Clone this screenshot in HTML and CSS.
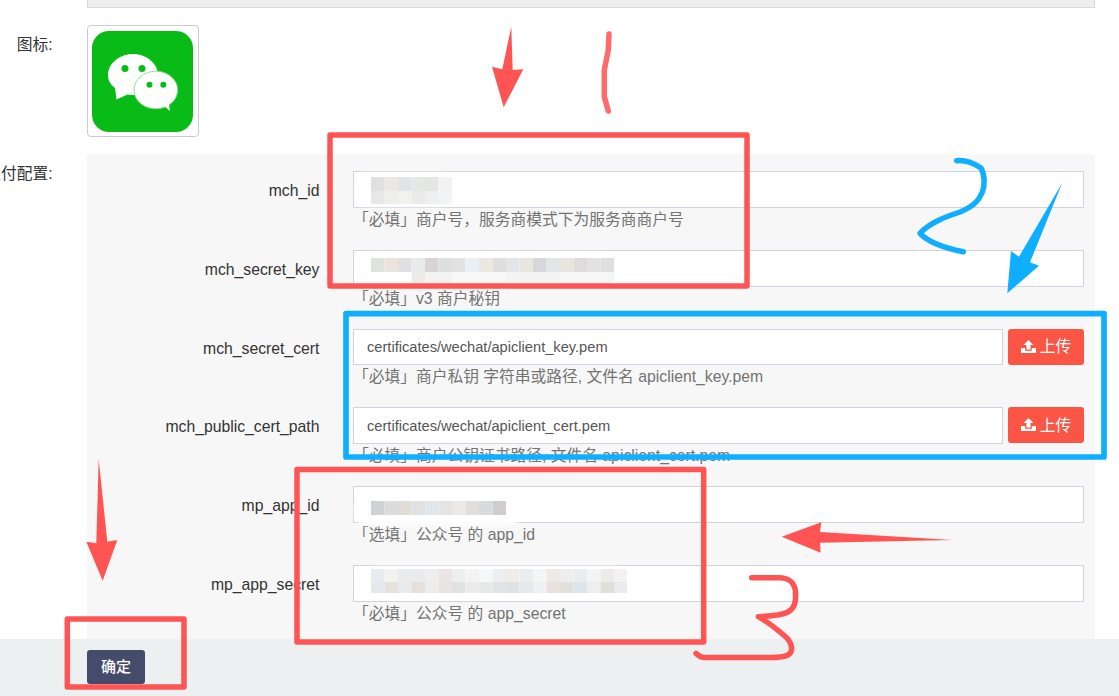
FILE: index.html
```html
<!DOCTYPE html>
<html lang="zh-CN">
<head>
<meta charset="utf-8">
<title>支付配置</title>
<link rel="stylesheet" href="styles.css">
</head>
<body>
<form class="page">
  <div class="top-field"></div>
  <div class="row">
    <div class="row-label">图标:</div>
    <div class="icon-box">
      <svg class="app-icon" viewBox="0 0 101 101" width="101" height="101">
        <rect width="101" height="101" rx="17" fill="#09bb17"/>
        <path d="M24.5 68.5 L23 57 C18 53 16 49 16 44 C16 33 27 23 41 23 C55 23 66 33 66 44 C66 55 55 64 41 64 C39 64 37.500 64 35.500 63.500 Z" fill="#fff"/>
        <ellipse cx="63.800" cy="59" rx="21.800" ry="18.800" fill="#fff" stroke="#8fdf95" stroke-width="1"/>
        <path d="M71 74 L78 80 L76.500 70 Z" fill="#fff"/>
        <circle cx="33" cy="37.500" r="3.500" fill="#09bb17"/>
        <circle cx="50" cy="37.500" r="3.500" fill="#09bb17"/>
        <circle cx="57.500" cy="53.800" r="3" fill="#09bb17"/>
        <circle cx="71.300" cy="53.800" r="3" fill="#09bb17"/>
      </svg>
    </div>
  </div>
  <div class="row">
    <div class="row-label">支付配置:</div>
    <div class="panel">
      <div class="field">
        <label class="field-label">mch_id</label>
        <div class="field-body">
          <input class="text-input" type="text">
          <p class="help">「必填」商户号，服务商模式下为服务商商户号</p>
        </div>
      </div>
      <div class="field">
        <label class="field-label">mch_secret_key</label>
        <div class="field-body">
          <input class="text-input" type="text">
          <p class="help">「必填」v3 商户秘钥</p>
        </div>
      </div>
      <div class="field">
        <label class="field-label">mch_secret_cert</label>
        <div class="field-body">
          <div class="input-line">
            <input class="text-input" type="text" value="certificates/wechat/apiclient_key.pem">
            <button class="upload" type="button">
              <svg class="upload-icon" viewBox="0 0 15 13" width="15" height="13"><path d="M7.500 0 L12.500 5 H9.500 V9.500 H5.500 V5 H2.500 Z M0 8 H4.200 V10.700 H10.800 V8 H15 V13 H0 Z" fill="#fff"/></svg>
              <span>上传</span>
            </button>
          </div>
          <p class="help">「必填」商户私钥 字符串或路径, 文件名 apiclient_key.pem</p>
        </div>
      </div>
      <div class="field">
        <label class="field-label">mch_public_cert_path</label>
        <div class="field-body">
          <div class="input-line">
            <input class="text-input" type="text" value="certificates/wechat/apiclient_cert.pem">
            <button class="upload" type="button">
              <svg class="upload-icon" viewBox="0 0 15 13" width="15" height="13"><path d="M7.500 0 L12.500 5 H9.500 V9.500 H5.500 V5 H2.500 Z M0 8 H4.200 V10.700 H10.800 V8 H15 V13 H0 Z" fill="#fff"/></svg>
              <span>上传</span>
            </button>
          </div>
          <p class="help">「必填」商户公钥证书路径, 文件名 apiclient_cert.pem</p>
        </div>
      </div>
      <div class="field">
        <label class="field-label">mp_app_id</label>
        <div class="field-body">
          <input class="text-input" type="text">
          <p class="help">「选填」公众号 的 app_id</p>
        </div>
      </div>
      <div class="field">
        <label class="field-label">mp_app_secret</label>
        <div class="field-body">
          <input class="text-input" type="text">
          <p class="help">「必填」公众号 的 app_secret</p>
        </div>
      </div>
    </div>
  </div>
  <div class="footer">
    <button class="confirm" type="button">确定</button>
  </div>
</form>

<svg class="markup" viewBox="0 0 1119 696" width="1119" height="696">
  <!-- mosaics that hide the secrets -->
  <g class="smear" fill="#fff">
    <rect x="356" y="173" width="96" height="33" rx="10"/>
    <rect x="367" y="253" width="246" height="33" rx="12"/>
    <rect x="355" y="497" width="165" height="28" rx="10"/>
    <rect x="362" y="567" width="266" height="28" rx="13"/>
  </g>
  <g>
    <rect x="371" y="177" width="13.500" height="14" fill="#e0dfe1"/><rect x="384.500" y="177" width="13.500" height="14" fill="#ece7e2"/><rect x="398" y="177" width="13.500" height="14" fill="#e2e3e7"/><rect x="411.500" y="177" width="13.500" height="14" fill="#e6e8e7"/><rect x="425" y="177" width="13.500" height="14" fill="#e5e5e3"/><rect x="438.500" y="177" width="13.500" height="14" fill="#f0f3f3"/>
    <rect x="371" y="191" width="13.500" height="13" fill="#e9e8e9"/><rect x="384.500" y="191" width="13.500" height="13" fill="#eeeeec"/><rect x="398" y="191" width="13.500" height="13" fill="#f1f1ef"/><rect x="411.500" y="191" width="13.500" height="13" fill="#eceae8"/><rect x="425" y="191" width="13.500" height="13" fill="#efeff2"/><rect x="438.500" y="191" width="13.500" height="13" fill="#f2f3f4"/>
  </g>
  <g>
    <rect x="371" y="258" width="13.500" height="14" fill="#e0e2de"/><rect x="384.500" y="258" width="13.500" height="14" fill="#ebe3dc"/><rect x="398" y="258" width="13.500" height="14" fill="#e0e0e2"/><rect x="411.500" y="258" width="13.500" height="14" fill="#e8ebec"/><rect x="425" y="258" width="13.500" height="14" fill="#d9d4d4"/><rect x="438.500" y="258" width="13.500" height="14" fill="#dde0e3"/><rect x="452" y="258" width="13.500" height="14" fill="#e2e2e2"/><rect x="465.500" y="258" width="13.500" height="14" fill="#e9f0f5"/><rect x="479" y="258" width="13.500" height="14" fill="#ede7e2"/><rect x="492.500" y="258" width="13.500" height="14" fill="#dededc"/><rect x="506" y="258" width="13.500" height="14" fill="#e4e5e8"/><rect x="519.500" y="258" width="13.500" height="14" fill="#ebe5df"/><rect x="533" y="258" width="13.500" height="14" fill="#d6d6dc"/><rect x="546.500" y="258" width="13.500" height="14" fill="#e3e4e6"/><rect x="560" y="258" width="13.500" height="14" fill="#e8e5df"/><rect x="573.500" y="258" width="13.500" height="14" fill="#dfdbdd"/><rect x="587" y="258" width="13.500" height="14" fill="#e2e2e2"/><rect x="600.500" y="258" width="13.500" height="14" fill="#e0dfdc"/>
    <rect x="411.500" y="272" width="13.500" height="12" fill="#ebebe8"/><rect x="425" y="272" width="27" height="12" fill="#f3f3f3"/><rect x="452" y="272" width="54" height="12" fill="#f8f8f8"/><rect x="506" y="272" width="54" height="12" fill="#f4f4f4"/><rect x="560" y="272" width="54" height="12" fill="#f5f6f7"/>
  </g>
  <g>
    <rect x="371" y="501" width="13.500" height="14" fill="#d0d2d3"/><rect x="384.500" y="501" width="13.500" height="14" fill="#d9dbdd"/><rect x="398" y="501" width="13.500" height="14" fill="#e2dcd6"/><rect x="411.500" y="501" width="13.500" height="14" fill="#dfe1e3"/><rect x="425" y="501" width="13.500" height="14" fill="#e0e7ec"/><rect x="438.500" y="501" width="13.500" height="14" fill="#e6e4e2"/><rect x="452" y="501" width="13.500" height="14" fill="#ebe8e6"/><rect x="465.500" y="501" width="13.500" height="14" fill="#e3dfdd"/><rect x="479" y="501" width="13.500" height="14" fill="#d8dadb"/><rect x="492.500" y="501" width="13.500" height="14" fill="#cfcdce"/>
  </g>
  <g>
    <rect x="371" y="569" width="13.500" height="13" fill="#e9ecef"/><rect x="384.500" y="569" width="13.500" height="13" fill="#f4f2ef"/><rect x="398" y="569" width="27" height="13" fill="#e9ebec"/><rect x="425" y="569" width="13.500" height="13" fill="#eeeeee"/><rect x="438.500" y="569" width="13.500" height="13" fill="#ebe6e3"/><rect x="452" y="569" width="13.500" height="13" fill="#eeeeef"/><rect x="465.500" y="569" width="13.500" height="13" fill="#f3f3f3"/><rect x="479" y="569" width="13.500" height="13" fill="#f6f7f7"/><rect x="492.500" y="569" width="13.500" height="13" fill="#eceef0"/><rect x="506" y="569" width="13.500" height="13" fill="#f0ede8"/><rect x="519.500" y="569" width="13.500" height="13" fill="#ebedef"/><rect x="533" y="569" width="13.500" height="13" fill="#f4f5f5"/><rect x="546.500" y="569" width="13.500" height="13" fill="#ece9e7"/><rect x="560" y="569" width="13.500" height="13" fill="#efeded"/><rect x="573.500" y="569" width="13.500" height="13" fill="#e9edf0"/><rect x="587" y="569" width="13.500" height="13" fill="#f4f4f4"/><rect x="600.500" y="569" width="13.500" height="13" fill="#eeeae8"/><rect x="614" y="569" width="13" height="13" fill="#f3f2f1"/>
    <rect x="371" y="582" width="13.500" height="11" fill="#e3e9ed"/><rect x="384.500" y="582" width="13.500" height="11" fill="#e6e1dd"/><rect x="398" y="582" width="13.500" height="11" fill="#e7ebec"/><rect x="411.500" y="582" width="13.500" height="11" fill="#e5e0da"/><rect x="425" y="582" width="13.500" height="11" fill="#ececec"/><rect x="438.500" y="582" width="13.500" height="11" fill="#e8e4e1"/><rect x="452" y="582" width="13.500" height="11" fill="#dfe2e3"/><rect x="465.500" y="582" width="13.500" height="11" fill="#ebebeb"/><rect x="479" y="582" width="13.500" height="11" fill="#e8e8e8"/><rect x="492.500" y="582" width="13.500" height="11" fill="#e2e3e4"/><rect x="506" y="582" width="13.500" height="11" fill="#dfe2e5"/><rect x="519.500" y="582" width="13.500" height="11" fill="#e6e9eb"/><rect x="533" y="582" width="13.500" height="11" fill="#eef0f1"/><rect x="546.500" y="582" width="13.500" height="11" fill="#e7e2de"/><rect x="560" y="582" width="13.500" height="11" fill="#e3dfda"/><rect x="573.500" y="582" width="13.500" height="11" fill="#dce5eb"/><rect x="587" y="582" width="13.500" height="11" fill="#eeeeee"/><rect x="600.500" y="582" width="13.500" height="11" fill="#e2dfdb"/><rect x="614" y="582" width="13" height="11" fill="#ebebed"/>
  </g>

  <!-- hand-drawn boxes -->
  <g fill="none" stroke="#ff5454" stroke-width="5.500" stroke-linejoin="round">
    <rect x="330" y="135" width="417" height="151"/>
    <rect x="297" y="469.500" width="406.700" height="172.500"/>
    <rect x="67.300" y="619" width="116.700" height="68"/>
  </g>
  <rect x="346" y="313.700" width="758" height="143.300" fill="none" stroke="#10aeff" stroke-width="5.700" stroke-linejoin="round"/>

  <!-- arrows -->
  <g fill="#ff5454">
    <path d="M511.300 26.700 L512.700 70 L523.300 69.300 L503.700 107.300 L492 66.700 L502.300 69.300 Z"/>
    <path d="M98.700 459 L107.300 541.700 L117.300 540 L102.700 580.700 L86.300 541.700 L96.300 543.300 Z"/>
    <path d="M952.700 540 L820 542.700 L820.700 552.700 L781.700 536.700 L821.300 522.300 L820 532 Z"/>
  </g>
  <path d="M1062.300 182.700 L1030 262.300 L1039 265.700 L1007.300 293.300 L1011 251 L1019 256.700 Z" fill="#10aeff"/>

  <!-- hand-written numerals -->
  <g fill="none" stroke-linecap="round" stroke-linejoin="round" stroke-width="5.500">
    <path d="M609 34 L608.300 50 L604.300 70 L604.300 96.700 L608.300 111" stroke="#ff6a6a"/>
    <path d="M956.700 160.700 C964 160 972 162 981 168 C985 175 985 186 982 193 C978 202 972 207 960 212 C948 216 930 222 920 233.300 C928 242 945 248 963.300 251.700" stroke="#10aeff"/>
    <path d="M751.700 577.700 H780 C790 578 795 584 795.500 592 C796 602 795 608 788 612 C780 616 770 616 758.300 616.700 C768 622 778 630 787 638 C793 645 793 652 788 655 C782 658 775 657.500 765 657.500 H704 C700 657.500 698 655 696 653.300" stroke="#ff5454"/>
  </g>
</svg>
</body>
</html>
```
FILE: styles.css
```css
* {
  box-sizing: border-box;
}

html,
body {
  margin: 0;
  height: 100%;
  overflow: hidden;
  background: #fff;
}

body {
  position: relative;
  font-family: "Liberation Sans", "Noto Sans CJK SC", sans-serif;
  font-size: 15.75px;
  line-height: 22.5px;
  color: #333;
}

.page {
  padding: 0 24px 0 0;
}

.top-field {
  height: 8px;
  margin-left: 87px;
  background: #eee;
  border: 1px solid #d8d8e2;
  border-top: 0;
}

.row {
  display: flex;
  align-items: flex-start;
  gap: 34.4px;
  margin-top: 17px;
}

.row-label {
  flex: 0 0 52.6px;
  width: 52.6px;
  display: flex;
  justify-content: flex-end;
  white-space: nowrap;
  padding-top: 9px;
}

.icon-box {
  width: 112px;
  height: 112px;
  padding: 5px 0 0 4px;
  border: 1px solid #ccc;
  border-radius: 4px;
  background: #fff;
}

.app-icon {
  display: block;
}

.panel {
  flex: 1;
  background: #f7f7f7;
  padding: 17px 11px 40px 0;
}

.field {
  display: flex;
  gap: 33.5px;
  margin-bottom: 18.5px;
}

.field-label {
  flex: 0 0 232.5px;
  height: 36.8px;
  padding-top: 3.6px;
  display: flex;
  align-items: center;
  justify-content: flex-end;
  white-space: nowrap;
}

.field-body {
  flex: 1;
  min-width: 0;
}

.input-line {
  display: flex;
  gap: 5px;
}

.text-input {
  display: block;
  width: 100%;
  height: 36.8px;
  padding: 0 13px;
  font: 14.65px "Liberation Sans", sans-serif;
  color: #555;
  background: #fff;
  border: 1px solid #d2d2e0;
  border-radius: 0;
  outline: 0;
}

.input-line .text-input {
  flex: 1;
  min-width: 0;
}

.help {
  margin: 0;
  padding-top: 1px;
  color: #737373;
}

.upload {
  flex: 0 0 76px;
  height: 36px;
  padding: 0;
  display: flex;
  align-items: center;
  justify-content: center;
  gap: 4px;
  font: inherit;
  color: #fff;
  background: #fb5546;
  border: 0;
  border-radius: 3px;
}

.upload span {
  position: relative;
  top: 1px;
}

.upload-icon {
  display: block;
  margin-bottom: 1px;
}

.footer {
  position: fixed;
  left: 0;
  right: 0;
  bottom: 0;
  height: 57px;
  padding: 11px 0 0 87px;
  background: #ecf0f1;
}

.confirm {
  display: block;
  width: 58px;
  height: 34px;
  padding: 0 0 4px;
  font: 500 15px "Liberation Sans", "Noto Sans CJK SC", sans-serif;
  color: #fff;
  background: #454b6b;
  border: 0;
  border-radius: 3px;
}

.markup {
  position: absolute;
  top: 0;
  left: 0;
  display: block;
  pointer-events: none;
}

.smear {
  filter: blur(2px);
}
```
